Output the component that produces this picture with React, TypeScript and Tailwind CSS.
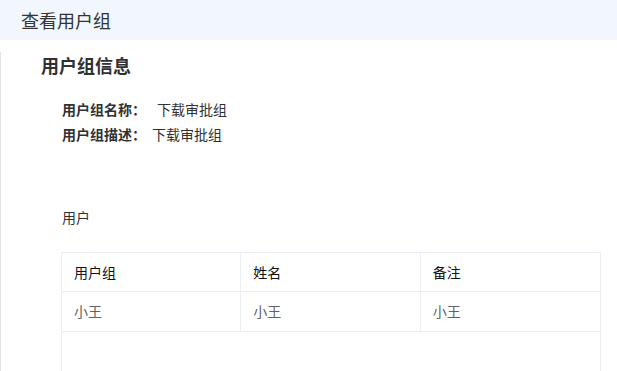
import React from 'react';

const font = { fontFamily: '"Noto Sans CJK SC", "Noto Sans", sans-serif' };

const rows = [{ group: '小王', name: '小王', note: '小王' }];

export default function App() {
  return (
    <div className="w-[617px] h-[371px] overflow-hidden bg-white text-[#333]" style={font}>
      <div className="h-[40px] bg-[#f2f7fe] pl-[21px] flex items-center text-[18px] text-[#333]">查看用户组</div>

      <div className="h-[331px] border-l border-[#e4e4e4] pl-[40px]">
        <h2 className="mt-[12px] text-[18px] leading-[26px] font-bold text-[#303133]">用户组信息</h2>

        <div className="mt-[19px] pl-[21px] text-[14px] leading-[25px] text-[#303133]">
          <div className="flex">
            <span className="font-bold">用户组名称：</span>
            <span className="ml-[11px]">下载审批组</span>
          </div>
          <div className="flex">
            <span className="font-bold">用户组描述：</span>
            <span className="ml-[6px]">下载审批组</span>
          </div>
        </div>

        <div className="mt-[59px] pl-[21px] text-[14px] leading-[22px] text-[#303133]">用户</div>

        <div className="mt-[24px] ml-[20px] w-[540px] h-[200px] border border-[#ebeef5] text-[14px]">
          <div className="grid grid-cols-3 h-[39px] border-b border-[#ebeef5] text-[#111]">
            <div className="flex items-center pl-[12px] border-r border-[#ebeef5]">用户组</div>
            <div className="flex items-center pl-[12px] border-r border-[#ebeef5]">姓名</div>
            <div className="flex items-center pl-[12px]">备注</div>
          </div>
          {rows.map((r, i) => (
            <div key={i} className="grid grid-cols-3 h-[40px] border-b border-[#ebeef5] text-[#606266]">
              <div className="flex items-center pl-[12px] border-r border-[#ebeef5]">{r.group}</div>
              <div className="flex items-center pl-[12px] border-r border-[#ebeef5]">{r.name}</div>
              <div className="flex items-center pl-[12px]">{r.note}</div>
            </div>
          ))}
        </div>
      </div>
    </div>
  );
}
